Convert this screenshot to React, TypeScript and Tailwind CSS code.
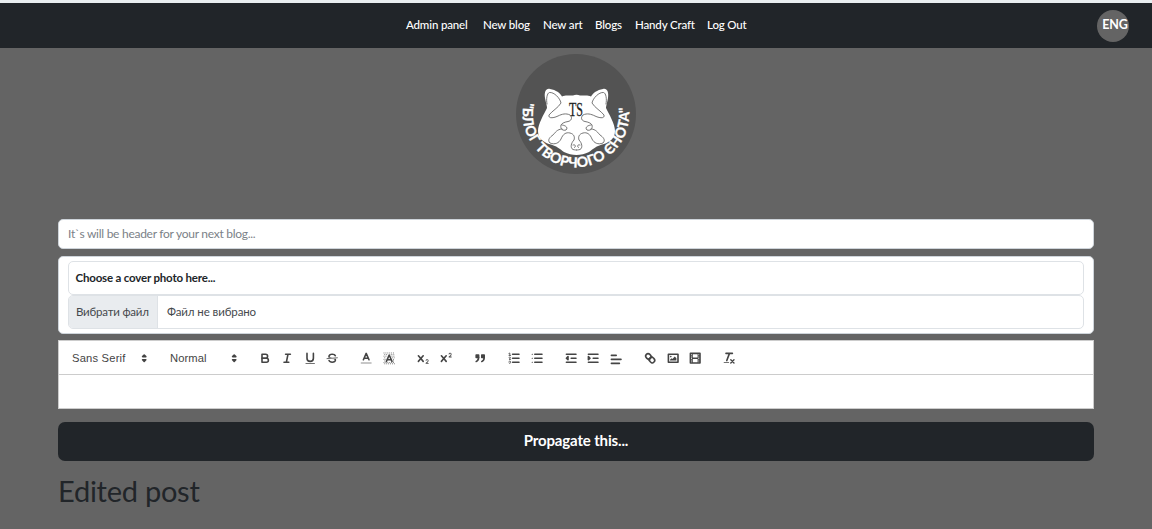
import type { ReactNode } from "react";

const navLinks = [
  { label: "Admin panel", w: "w-[64px]" },
  { label: "New blog", w: "w-[47px]" },
  { label: "New art", w: "w-[39px]" },
  { label: "Blogs", w: "w-[27px]" },
  { label: "Handy Craft", w: "w-[59px]" },
  { label: "Log Out", w: "w-[39px]" },
];

function Icon({ children }: { children: ReactNode }) {
  return (
    <span className="flex h-[19px] w-[22.4px] items-center justify-center">
      <svg viewBox="0 0 18 18" className="h-[14.4px] w-[14.4px] fill-none stroke-[#444] stroke-2 [stroke-linecap:round] [stroke-linejoin:round]">
        {children}
      </svg>
    </span>
  );
}

const X_PATH =
  "M9.65,5.241a1,1,0,0,0-1.409.108L6,7.964,3.759,5.349A1,1,0,0,0,2.192,6.592Q2.215,6.621,2.241,6.649L4.684,9.5,2.241,12.35A1,1,0,0,0,3.71,13.707q.026-.028.049-.057L6,11.036,8.241,13.65a1,1,0,1,0,1.567-1.243Q9.785,12.378,9.759,12.35L7.316,9.5,9.759,6.651A1,1,0,0,0,9.65,5.241Z";
const TWO_PATH =
  "M15.5,15H13.861a3.858,3.858,0,0,0,1.914-2.975,1.8,1.8,0,0,0-1.6-1.751A1.921,1.921,0,0,0,12.021,11.7a.5.5,0,1,0,.957.291h0a.914.914,0,0,1,1.053-.725.81.81,0,0,1,.744.762c0,1.076-1.17,1.87-1.94,2.431A1.456,1.456,0,0,0,12,15.5a.5.5,0,0,0,.5.5h3A.5.5,0,0,0,15.5,15Z";
const solid = "fill-[#444] stroke-none";

function Picker({ label, className }: { label: string; className: string }) {
  return (
    <div className={`flex h-[19px] items-center justify-between pl-[6.4px] font-['Liberation_Sans',sans-serif] text-[11.2px] text-[#444] ${className}`}>
      <span>{label}</span>
      <svg viewBox="0 0 18 18" className="h-[14.4px] w-[14.4px] fill-[#444] stroke-[#444] stroke-2 [stroke-linejoin:round]">
        <polygon points="7 11 9 13 11 11" />
        <polygon points="7 7 9 5 11 7" />
      </svg>
    </div>
  );
}

function Toolbar() {
  return (
    <div className="flex h-[34px] items-center border-b border-[#ccc] pt-[2px] pl-[6.6px]">
      <Picker label="Sans Serif" className="mr-[12.6px] w-[85.4px] tracking-[0.2px]" />
      <Picker label="Normal" className="mr-[12px] w-[78.2px] tracking-[0.1px]" />
      <div className="mr-[12px] flex">
        <Icon>
          <path d="M5,4H9.5A2.5,2.5,0,0,1,9.5,9H5Z" />
          <path d="M5,9h5.5A2.5,2.5,0,0,1,10.5,14H5Z" />
        </Icon>
        <Icon><path d="M7,4H13M5,14H11M8,14L10,4" /></Icon>
        <Icon>
          <path d="M5,3V9a4,4,0,0,0,8,0V3" />
          <rect className={solid} x="3" y="15" width="12" height="1" rx=".5" />
        </Icon>
        <Icon>
          <path className="stroke-1" d="M15.5,8.5L2.5,9.5" />
          <path className={solid} d="M9.007,8C6.542,7.791,6,7.519,6,6.5,6,5.792,7.283,5,9,5c1.571,0,2.765.679,2.969,1.309a1,1,0,0,0,1.9-.617C13.356,4.106,11.354,3,9,3,6.2,3,4,4.538,4,6.5a3.2,3.2,0,0,0,.5,1.843Z" />
          <path className={solid} d="M8.984,10C11.457,10.208,12,10.479,12,11.5c0,.708-1.283,1.5-3,1.5-1.571,0-2.765-.679-2.969-1.309a1,1,0,1,0-1.9.617C4.644,13.894,6.646,15,9,15c2.8,0,5-1.538,5-3.5a3.2,3.2,0,0,0-.5-1.843Z" />
        </Icon>
      </div>
      <div className="mr-[12px] flex">
        <Icon>
          <path className="opacity-40" d="M3,15H15" />
          <path d="M5.5,11L9,3L12.5,11M11.63,9H6.38" />
        </Icon>
        <Icon>
          <path className="stroke-1 [stroke-dasharray:1_1.4] [stroke-linecap:butt]" d="M2,2.5H16M3,4.5H7M11,4.5H16M2,6.5H6M12,6.5H16M3,8.5H5M13,8.5H16M2,10.5H5M14,10.5H16M3,12.5H4M14,12.5H16M2,14.5H16M3,16H16" />
          <path d="M5.5,13L9,5L12.5,13M11.63,11H6.38" />
        </Icon>
      </div>
      <div className="mr-[12px] flex">
        <Icon><path className={solid} d={X_PATH} /><path className={solid} d={TWO_PATH} /></Icon>
        <Icon><path className={solid} d={X_PATH} /><path className={solid} d={TWO_PATH} transform="translate(0 -8)" /></Icon>
      </div>
      <div className="mr-[12px] flex">
        <Icon>
          <rect className="fill-[#444]" x="4" y="5" width="3" height="3" />
          <rect className="fill-[#444]" x="11" y="5" width="3" height="3" />
          <path className="fill-[#444]" d="M7,8c0,4.031-3,5-3,5M14,8c0,4.031-3,5-3,5" />
        </Icon>
      </div>
      <div className="mr-[12px] flex">
        <Icon>
          <path d="M7,4H15M7,9H15M7,14H15" />
          <path className="stroke-1" d="M2.5,5.5H4.5M2.4,3L3.5,2.5V5.5M4.5,10.5h-2c0-.234,1.85-1.076,1.85-2.234A.959.959,0,0,0,2.5,8.156M2.5,14.846a.959.959,0,0,0,1.85-.109A.7.7,0,0,0,3.75,14a.688.688,0,0,0,.6-.736,.959.959,0,0,0-1.85-.109" />
        </Icon>
        <Icon><path d="M6,4H15M6,9H15M6,14H15" /><path className="stroke-[1.3]" d="M2.7,4H3M2.7,9H3M2.7,14H3" /></Icon>
      </div>
      <div className="mr-[12px] flex">
        <Icon><path d="M3,14H15M3,4H15M9,9H15M5,7V11L3,9Z" /></Icon>
        <Icon><path d="M3,14H15M3,4H15M9,9H15" /><path className="fill-[#444]" d="M3,7V11L5,9Z" /></Icon>
        <Icon><path transform="translate(0 1.5)" d="M3,9H15M3,14H13M3,4H9" /></Icon>
      </div>
      <div className="mr-[12px] flex">
        <Icon>
          <path d="M7,11L11,7" />
          <path d="M8.9,4.577a3.476,3.476,0,0,1,.36,4.679A3.476,3.476,0,0,1,4.577,8.9C3.185,7.5,2.035,6.4,4.217,4.217S7.5,3.185,8.9,4.577Z" />
          <path d="M13.423,9.1a3.476,3.476,0,0,0-4.679-.36,3.476,3.476,0,0,0,.36,4.679c1.392,1.392,2.5,2.542,4.679.36S14.815,10.5,13.423,9.1Z" />
        </Icon>
        <Icon>
          <rect x="3" y="4" width="12" height="10" />
          <circle className={solid} cx="6" cy="7" r="1" />
          <polyline className={solid} points="5 12 5 11 7 9 8 10 11 7 13 9 13 12" />
        </Icon>
        <Icon>
          <rect x="3" y="3" width="12" height="12" />
          <path className={solid} d="M5,3h1v12H5zM12,3h1v12h-1zM5,8h8v2H5zM3,5h3v1H3zM3,7h3v1H3zM3,10h3v1H3zM3,12h3v1H3zM12,5h3v1h-3zM12,7h3v1h-3zM12,10h3v1h-3zM12,12h3v1h-3z" />
        </Icon>
      </div>
      <Icon>
        <path d="M5,3H13M6,12L9.35,3" />
        <path className="stroke-[1.7]" d="M11,11L15,15M15,11L11,15" />
        <rect className={solid} x="2" y="14" width="7" height="1" rx=".5" />
      </Icon>
    </div>
  );
}

function FaceLines() {
  return (
    <>
      <path d="M31 50C30 45 31 39 33.500 38.500C38 38 44 44 45 49C42 54 36 57 33 61C32 65 38 64 42 62C46 60 50 59 54 61C57 64 55 67 52 67.500C49 68 46 69 45 71C44 75 47 77 50 76C53 73 48 71 46 71" />
      <path d="M46 75C41 75 39 79 37 81C34 83 31 86 34 89C39 91 43 89 45 85C47 80 50 78 54 79C58 80 59 83 58 86C55 89 54 94 57 95.500C59 96 60 96 60.500 96M57 91C60 90 60 93 58.500 93.500" />
    </>
  );
}

function Logo() {
  return (
    <svg viewBox="0 0 120 120" className="h-[120px] w-[120px]">
      <circle cx="60" cy="60" r="60" fill="#535353" />
      <path fill="#fff" d="M29 44C28 38 30 34 34 35C40 36 44 39 46 42.500C50 40.500 54 42 57 41.500C59 40.500 62 40.500 64 41.500C67 42 71 40.500 75 42.500C77 39 81 36 87 35C91 34 93 38 92 44C91 49 90 52 90 54C93 60 99 70 99 77C99 84 94 88 88 90C80 92 77 95 73 98C65 102 56 102 48 98C44 95 41 92 33 90C27 88 22 84 22 77C22 70 28 60 31 54C31 52 30 49 29 44Z" />
      <g fill="none" stroke="#555" strokeWidth=".8" strokeLinecap="round" strokeLinejoin="round">
        <FaceLines />
        <g transform="translate(121 0) scale(-1 1)"><FaceLines /></g>
      </g>
      <text x="53" y="62" textLength="14" lengthAdjust="spacingAndGlyphs" className="fill-[#222] stroke-[#222] stroke-[0.3] font-['Liberation_Serif',serif] text-[19px]">TS</text>
      <path id="logo-arc" d="M8.200 48A53.200 53.200 0 1 0 111.800 48" fill="none" />
      <text className="fill-white stroke-white stroke-[0.3] font-['Lato',sans-serif] text-[14px] font-bold">
        <textPath href="#logo-arc" textLength="186" lengthAdjust="spacing">"БЛОГ ТВОРЧОГО ЄНОТА"</textPath>
      </text>
    </svg>
  );
}

export default function App() {
  return (
    <div className="flex h-[529px] flex-col overflow-hidden border-t-[3px] border-[#e9eef0] bg-[#646464] font-['Lato','Noto_Sans',sans-serif] text-[#212529]">
      <nav className="grid h-[45px] shrink-0 grid-cols-[1fr_auto_1fr] items-center bg-[#212529] text-white">
        <span />
        <div className="flex gap-[13px] pb-[2px] text-[11.5px] font-medium tracking-[-0.15px] whitespace-nowrap">
          {navLinks.map((l) => <a key={l.label} className={l.w}>{l.label}</a>)}
        </div>
        <button className="mr-[23px] flex h-8 w-8 items-center justify-center justify-self-end rounded-full bg-[#646464] pb-px pl-[4px] text-[12.5px] font-bold tracking-[-0.2px]">ENG</button>
      </nav>
      <header className="mt-[6px] flex h-[120px] shrink-0 justify-center"><Logo /></header>
      <main className="mx-auto mt-[45px] flex w-[1036px] shrink-0 flex-col">
        <input className="h-[30px] rounded-[5px] border border-[#ced4da] bg-white px-[9px] pb-[2px] text-[12px] tracking-[-0.27px] placeholder:text-[#7b8187]" placeholder="It`s will be header for your next blog..." />
        <section className="mt-[7px] flex h-[78px] flex-col rounded-[5px] border border-[#ced4da] bg-white px-[9px] pt-[4px]">
          <label className="flex h-[34px] items-center rounded-[5px] border border-[#dee2e6] px-[6.500px] text-[11.5px] font-bold tracking-[-0.18px]">Choose a cover photo here...</label>
          <div className="flex h-[34px] items-stretch overflow-hidden rounded-[5px] border border-[#dee2e6] text-[11.5px] text-[#45494d]">
            <span className="flex w-[89px] items-center border-r border-[#dee2e6] bg-[#e9ecef] pl-[7px] tracking-[-0.2px] whitespace-nowrap">Вибрати файл</span>
            <span className="flex items-center pl-[9px] tracking-[-0.1px]">Файл не вибрано</span>
          </div>
        </section>
        <section className="mt-[6px] h-[69px] border border-[#ccc] bg-white"><Toolbar /></section>
        <button className="mt-[13px] h-[39px] rounded-[7px] bg-[#212529] pb-[2px] text-[15px] font-bold tracking-[-0.15px] text-white">Propagate this...</button>
        <h1 className="mt-[10px] text-[29px] leading-[40px] tracking-[-0.25px]">Edited post</h1>
      </main>
    </div>
  );
}
